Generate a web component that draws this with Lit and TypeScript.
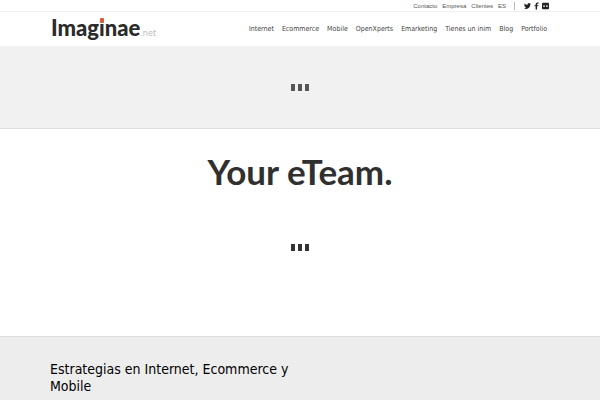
import { LitElement, html, css } from "lit";
import { customElement } from "lit/decorators.js";

@customElement("loading-dots")
class LoadingDots extends LitElement {
  static styles = css`
    :host {
      display: flex;
      justify-content: center;
      gap: 3px;
    }
    .dot {
      width: 4px;
      height: 7px;
      background: var(--dot-color, #555);
    }
  `;
  render() {
    return [0, 1, 2].map(() => html`<span class="dot"></span>`);
  }
}

@customElement("app-root")
class AppRoot extends LitElement {
  static styles = css`
    :host {
      display: block;
      background: #fff;
      color: #333;
      font-family: "Liberation Sans", Arial, sans-serif;
    }
    a {
      color: inherit;
      text-decoration: none;
    }
    .topbar {
      display: flex;
      justify-content: flex-end;
      align-items: center;
      height: 11px;
      padding: 0 51px;
      border-bottom: 1px solid #f0f0f0;
      font-size: 6px;
      line-height: 10px;
      color: #555;
    }
    .links {
      display: flex;
      gap: 5px;
    }
    .social {
      display: flex;
      gap: 2px;
      margin-left: 8px;
      padding-left: 9px;
      border-left: 1px solid #bbb;
    }
    .social a {
      display: flex;
    }
    .social svg {
      width: 7px;
      height: 8px;
      fill: #222;
    }
    .header {
      display: flex;
      justify-content: space-between;
      align-items: center;
      height: 34px;
      padding: 0 53px 0 51px;
    }
    .logo {
      display: flex;
      align-items: baseline;
      padding-bottom: 2px;
      font: 900 22px/28px Lato, sans-serif;
      color: #2b2b2b;
    }
    .i {
      position: relative;
    }
    .i::after {
      content: "";
      position: absolute;
      left: 1px;
      top: 4px;
      width: 4px;
      height: 5px;
      border-radius: 1px;
      background: #d0603a;
    }
    .net {
      font: 400 9px/10px "DejaVu Sans Condensed", "Open Sans", sans-serif;
      color: #bbb;
    }
    .nav {
      display: flex;
      gap: 8px;
      font: 7px/10px "DejaVu Sans Condensed", "Open Sans", sans-serif;
      color: #444;
    }
    .banner {
      padding: 38px 0 37px;
      background: #f1f1f1;
      border-bottom: 1px solid #ddd;
    }
    .hero {
      padding: 18px 0 85px;
      text-align: center;
      --dot-color: #333;
    }
    .title {
      margin: 0 0 49px;
      font: 700 35px/48px Lato, sans-serif;
      color: #303030;
    }
    .intro {
      padding: 24px 50px 5px;
      background: #ededed;
      border-top: 1px solid #ddd;
    }
    .intro h2 {
      width: 50%;
      margin: 0;
      font: 14px/17px "DejaVu Sans Condensed", "Open Sans", sans-serif;
      color: #000;
    }
  `;

  render() {
    const top = ["Contacto", "Empresa", "Clientes", "ES"];
    const nav = ["Internet", "Ecommerce", "Mobile", "OpenXperts", "Emarketing", "Tienes un inim", "Blog", "Portfolio"];
    return html`
      <div class="topbar">
        <nav class="links">${top.map((t) => html`<a href="#">${t}</a>`)}</nav>
        <div class="social">
          <a href="#" aria-label="Twitter"><svg viewBox="0 0 24 24"><path d="M24 4.6a10 10 0 0 1-2.8.8 5 5 0 0 0 2.2-2.7 10 10 0 0 1-3.1 1.2 4.9 4.9 0 0 0-8.4 4.5A14 14 0 0 1 1.7 3.1a4.9 4.9 0 0 0 1.5 6.6 5 5 0 0 1-2.2-.6 4.9 4.9 0 0 0 3.9 4.9 5 5 0 0 1-2.2.1 4.9 4.9 0 0 0 4.6 3.4A10 10 0 0 1 0 19.5 14 14 0 0 0 21.500 7a10 10 0 0 0 2.500-2.400z"/></svg></a>
          <a href="#" aria-label="Facebook"><svg viewBox="0 0 24 24"><path d="M9 24V13H5V9h4V6q0-6 6-6h4v4h-3q-2 0-2 2v3h5l-1 4h-4v11z"/></svg></a>
          <a href="#" aria-label="Flickr"><svg viewBox="0 0 24 24"><path fill-rule="evenodd" d="M4 1h16q4 0 4 4v14q0 4-4 4H4q-4 0-4-4V5q0-4 4-4zM7 9a3 3 0 1 0 0 6 3 3 0 0 0 0-6zm10 0a3 3 0 1 0 0 6 3 3 0 0 0 0-6z"/></svg></a>
        </div>
      </div>
      <header class="header">
        <a class="logo" href="#"><span>Imag<span class="i">i</span>nae</span><span class="net">.net</span></a>
        <nav class="nav">${nav.map((t) => html`<a href="#">${t}</a>`)}</nav>
      </header>
      <section class="banner"><loading-dots></loading-dots></section>
      <section class="hero">
        <h1 class="title">Your eTeam.</h1>
        <loading-dots></loading-dots>
      </section>
      <section class="intro"><h2>Estrategias en Internet, Ecommerce y Mobile</h2></section>
    `;
  }
}
